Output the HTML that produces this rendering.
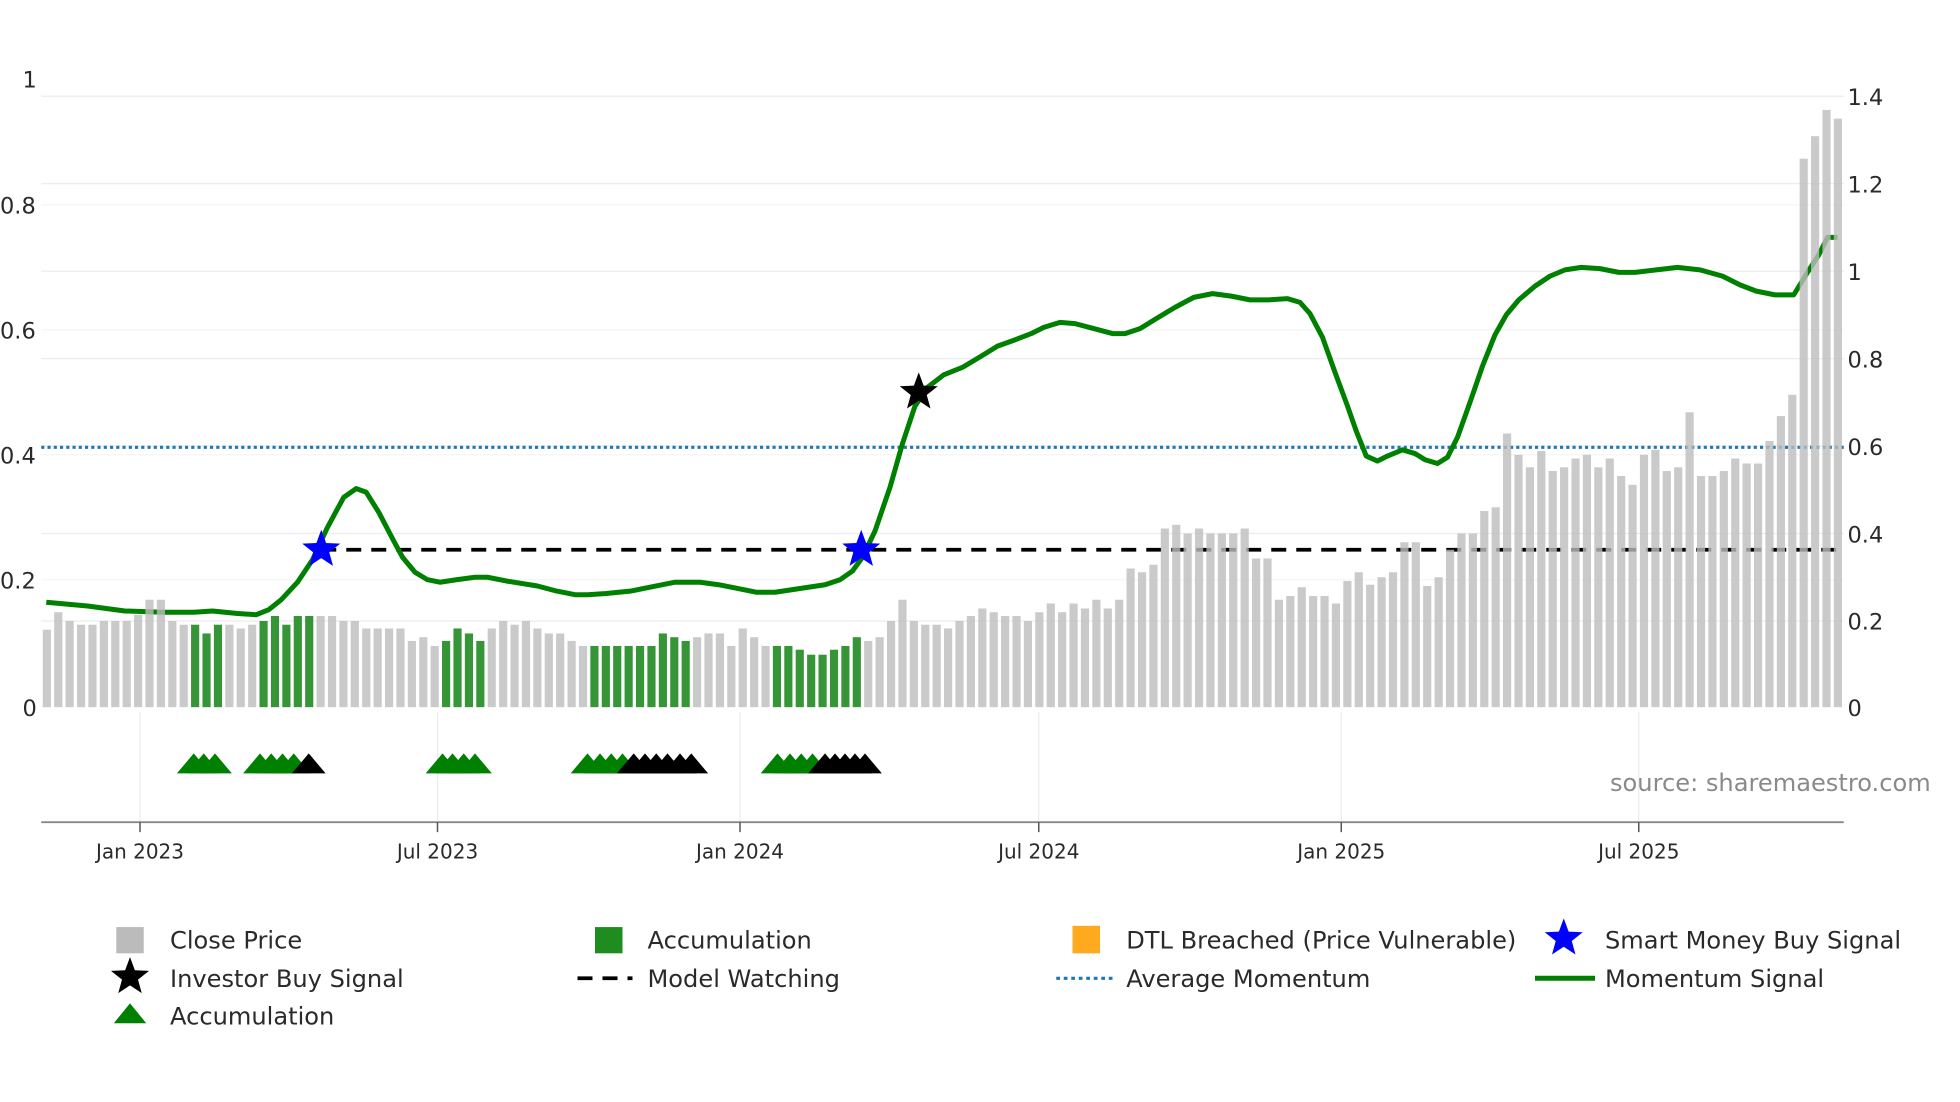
<!DOCTYPE html>
<html><head><meta charset="utf-8"><style>
html,body{margin:0;padding:0;background:#fff;width:1960px;height:1102px;overflow:hidden}
svg{display:block}
text{font-family:"DejaVu Sans","Liberation Sans",sans-serif;fill:#2a2a2a}
</style></head><body>
<svg id="s" width="1960" height="1102" viewBox="0 0 1568 882" preserveAspectRatio="none" xmlns="http://www.w3.org/2000/svg">
<g stroke="#ececf0" stroke-width="1">
<line x1="33" x2="1475" y1="77" y2="77"/><line x1="33" x2="1475" y1="147" y2="147"/><line x1="33" x2="1475" y1="217" y2="217"/><line x1="33" x2="1475" y1="287" y2="287"/><line x1="33" x2="1475" y1="357" y2="357"/><line x1="33" x2="1475" y1="427" y2="427"/><line x1="33" x2="1475" y1="497" y2="497"/>
<line x1="33" x2="1475" y1="164" y2="164" stroke="#f4f4f6"/><line x1="33" x2="1475" y1="264" y2="264" stroke="#f4f4f6"/><line x1="33" x2="1475" y1="364" y2="364" stroke="#f4f4f6"/><line x1="33" x2="1475" y1="464" y2="464" stroke="#f4f4f6"/>
<line x1="112" x2="112" y1="570" y2="658"/><line x1="350" x2="350" y1="570" y2="658"/><line x1="592" x2="592" y1="570" y2="658"/><line x1="831" x2="831" y1="570" y2="658"/><line x1="1073" x2="1073" y1="570" y2="658"/><line x1="1311" x2="1311" y1="570" y2="658"/>
</g>
<line x1="33" x2="1475" y1="358" y2="358" stroke="#1f77b4" stroke-width="2.5" stroke-dasharray="2.5 2.5"/>
<line x1="257" x2="1470" y1="440" y2="440" stroke="#000" stroke-width="3" stroke-dasharray="12 8"/>
<path fill="none" stroke="#008000" stroke-width="4" stroke-linejoin="round" d="M37,482 L70,485 100,489 130,490 155,490 170,489 190,491 205,492 215,488 225,480 238,466 250,448 262,422 275,398 285,391 293,394 303,410 315,433 322,446 332,458 342,464 352,466 365,464 380,462 390,462 405,465 430,469 445,473 460,476 470,476 485,475 505,473 520,470 540,466 560,466 575,468 590,471 605,474 620,474 640,471 660,468 672,464 682,457 690,446 700,425 712,390 722,355 732,325 742,310 755,300 770,294 785,285 798,277 812,272 825,267 835,262 848,258 860,259 875,263 890,267 900,267 912,263 925,255 940,246 955,238 970,235 985,237 1000,240 1015,240 1030,239 1040,242 1048,251 1058,270 1068,298 1078,325 1085,345 1093,365 1102,369 1110,365 1122,360 1132,363 1140,368 1150,371 1158,366 1166,350 1176,322 1186,293 1196,268 1205,252 1215,240 1228,229 1240,221 1252,216 1265,214 1280,215 1295,218 1308,218 1325,216 1342,214 1360,216 1378,221 1392,228 1405,233 1420,236 1435,236 1446,218 1455,204 1462,190 1470,190"/>
<g id="bars"></g>
<g id="stars"></g>
<line x1="33" x2="1475" y1="658" y2="658" stroke="#888" stroke-width="1.5"/>
<g stroke="#555" stroke-width="1.2"><line x1="112" x2="112" y1="658" y2="666"/><line x1="350" x2="350" y1="658" y2="666"/><line x1="592" x2="592" y1="658" y2="666"/><line x1="831" x2="831" y1="658" y2="666"/><line x1="1073" x2="1073" y1="658" y2="666"/><line x1="1311" x2="1311" y1="658" y2="666"/></g>
<g id="tri"></g>
<g font-size="18">
<text x="18" y="70">1</text><text x="0" y="171">0.8</text><text x="0" y="271">0.6</text><text x="0" y="371">0.4</text><text x="0" y="471">0.2</text><text x="18" y="573">0</text>
<text x="1478" y="84">1.4</text><text x="1478" y="154">1.2</text><text x="1478" y="224">1</text><text x="1478" y="294">0.8</text><text x="1478" y="364">0.6</text><text x="1478" y="434">0.4</text><text x="1478" y="504">0.2</text><text x="1478" y="573">0</text>
</g>
<g font-size="16" text-anchor="middle"><text x="112" y="687">Jan 2023</text><text x="350" y="687">Jul 2023</text><text x="592" y="687">Jan 2024</text><text x="831" y="687">Jul 2024</text><text x="1073" y="687">Jan 2025</text><text x="1311" y="687">Jul 2025</text></g>
<text x="1288" y="633" font-size="19.3" style="fill:#8a8a8a">source: sharemaestro.com</text>
<g font-size="19.3">
<rect x="93" y="742" width="22" height="21" fill="#bbb"/><text x="136" y="759">Close Price</text>
<text x="136" y="790">Investor Buy Signal</text>
<polygon points="104,803 117,819 91,819" fill="#008000"/><text x="136" y="820">Accumulation</text>
<rect x="476" y="742" width="22" height="21" fill="#1f8c1f"/><text x="518" y="759">Accumulation</text>
<line x1="462" x2="506" y1="783" y2="783" stroke="#000" stroke-width="3" stroke-dasharray="12 8"/><text x="518" y="790">Model Watching</text>
<rect x="858" y="741" width="22" height="22" fill="#ffa91f"/><text x="901" y="759">DTL Breached (Price Vulnerable)</text>
<line x1="845" x2="890" y1="783" y2="783" stroke="#1f77b4" stroke-width="2.5" stroke-dasharray="3 3"/><text x="901" y="790">Average Momentum</text>
<text x="1284" y="759">Smart Money Buy Signal</text>
<line x1="1228" x2="1276" y1="783" y2="783" stroke="#008000" stroke-width="4"/><text x="1284" y="790">Momentum Signal</text>
</g>
<g id="lstars"></g>
</svg>
<script>
var NS="http://www.w3.org/2000/svg";
function el(p,t,a){var e=document.createElementNS(NS,t);for(var k in a)e.setAttribute(k,a[k]);document.getElementById(p).appendChild(e);return e;}
var tops=[504,490,497,500,500,497,497,497,492,480,480,497,500,500,507,500,500,503,500,497,493,500,493,493,493,493,497,497,503,503,503,503,513,510,517,513,503,507,513,503,497,500,497,503,507,507,513,517,517,517,517,517,517,517,507,510,513,510,507,507,517,503,510,517,517,517,520,524,524,520,517,510,513,510,497,480,497,500,500,503,497,493,487,490,493,493,497,490,483,490,483,487,480,487,480,455,458,452,423,420,427,423,427,427,427,423,447,447,480,477,470,477,477,483,465,458,468,462,458,434,434,469,462,440,427,427,409,406,347,364,374,361,377,374,367,364,374,367,381,388,364,360,377,374,330,381,381,377,367,371,371,353,333,316,127,109,88,95];
var n=tops.length,x0=33,x1=1475,pitch=(x1-x0)/n;
var greens=[[150,180],[205,252],[352,392],[470,556],[618,694]];
for(var i=0;i<n;i++){var x=x0+i*pitch+1.2,w=pitch-2.6,cx=x+w/2,g=false;
for(var j=0;j<greens.length;j++)if(cx>=greens[j][0]&&cx<=greens[j][1])g=true;
el("bars","rect",{x:x,y:tops[i],width:w,height:566-tops[i],fill:g?"#1a861a":"#bdbdbd","fill-opacity":g?0.88:0.8});}
function star(p,cx,cy,r,c){var pts=[];for(var k=0;k<10;k++){var rr=k%2?r*0.42:r,a=-Math.PI/2+k*Math.PI/5;pts.push((cx+rr*Math.cos(a)).toFixed(1)+","+(cy+rr*Math.sin(a)).toFixed(1));}el(p,"polygon",{points:pts.join(" "),fill:c});}
star("stars",257,440,16,"#0000ff");star("stars",689,440,16,"#0000ff");star("stars",735,314,16,"#000");
star("lstars",104,782,16,"#000");star("lstars",1251,751,16,"#0000ff");
function tri(cx,c){el("tri","polygon",{points:cx+",603 "+(cx+13.5)+",619 "+(cx-13.5)+",619",fill:c});}
[155,163,172,208,217,226,235,354,362,371,380,470,480,489,498,622,632,641,650].forEach(function(x){tri(x,"#008000");});
[247,507,516,525,534,544,553,660,668,676,684,692].forEach(function(x){tri(x,"#000");});
</script>
</body></html>
